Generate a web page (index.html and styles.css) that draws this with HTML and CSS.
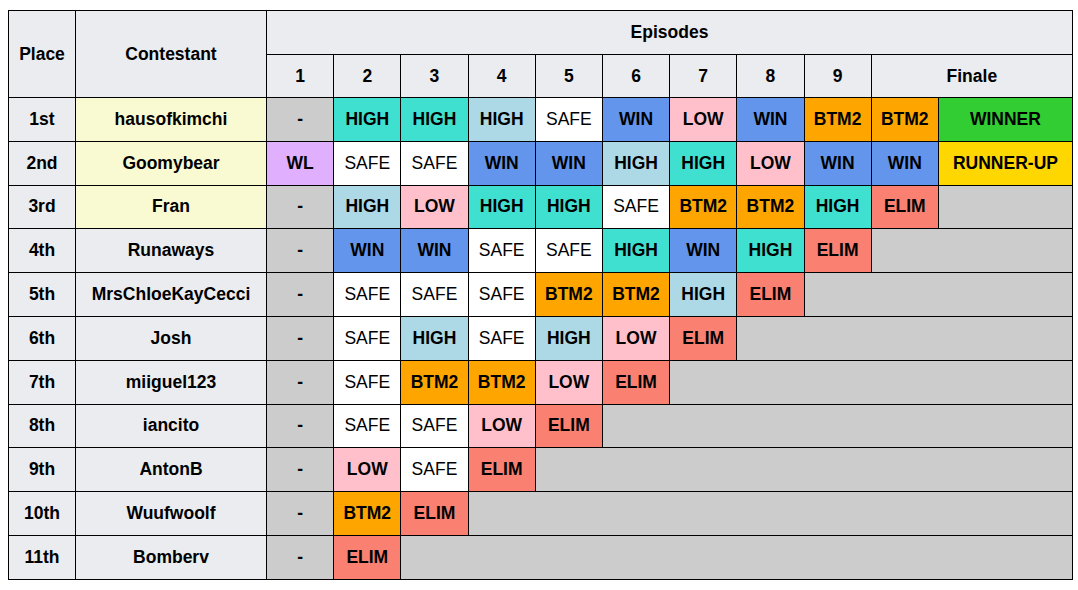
FILE: index.html
```html
<!DOCTYPE html>
<html>
<head>
<meta charset="utf-8">
<link rel="stylesheet" href="styles.css">
</head>
<body>
<table class="results">
  <colgroup>
    <col class="c-place">
    <col class="c-name">
    <col class="c-ep"><col class="c-ep"><col class="c-ep"><col class="c-ep"><col class="c-ep">
    <col class="c-ep"><col class="c-ep"><col class="c-ep"><col class="c-ep"><col class="c-ep">
    <col class="c-fin">
  </colgroup>
  <thead>
    <tr class="hrow1">
      <th rowspan="2">Place</th>
      <th rowspan="2">Contestant</th>
      <th colspan="11">Episodes</th>
    </tr>
    <tr class="hrow2">
      <th>1</th><th>2</th><th>3</th><th>4</th><th>5</th><th>6</th><th>7</th><th>8</th><th>9</th>
      <th colspan="2">Finale</th>
    </tr>
  </thead>
  <tbody>
    <tr>
      <th>1st</th><td class="top">hausofkimchi</td>
      <td class="na">-</td><td class="high">HIGH</td><td class="high">HIGH</td><td class="high2">HIGH</td><td class="safe">SAFE</td><td class="win">WIN</td><td class="low">LOW</td><td class="win">WIN</td><td class="btm">BTM2</td><td class="btm">BTM2</td><td class="winner">WINNER</td>
    </tr>
    <tr>
      <th>2nd</th><td class="top">Goomybear</td>
      <td class="wl">WL</td><td class="safe">SAFE</td><td class="safe">SAFE</td><td class="win">WIN</td><td class="win">WIN</td><td class="high2">HIGH</td><td class="high">HIGH</td><td class="low">LOW</td><td class="win">WIN</td><td class="win">WIN</td><td class="runner">RUNNER-UP</td>
    </tr>
    <tr>
      <th>3rd</th><td class="top">Fran</td>
      <td class="na">-</td><td class="high2">HIGH</td><td class="low">LOW</td><td class="high">HIGH</td><td class="high">HIGH</td><td class="safe">SAFE</td><td class="btm">BTM2</td><td class="btm">BTM2</td><td class="high">HIGH</td><td class="elim">ELIM</td><td class="na"></td>
    </tr>
    <tr>
      <th>4th</th><td class="name">Runaways</td>
      <td class="na">-</td><td class="win">WIN</td><td class="win">WIN</td><td class="safe">SAFE</td><td class="safe">SAFE</td><td class="high">HIGH</td><td class="win">WIN</td><td class="high">HIGH</td><td class="elim">ELIM</td><td class="na" colspan="2"></td>
    </tr>
    <tr>
      <th>5th</th><td class="name">MrsChloeKayCecci</td>
      <td class="na">-</td><td class="safe">SAFE</td><td class="safe">SAFE</td><td class="safe">SAFE</td><td class="btm">BTM2</td><td class="btm">BTM2</td><td class="high2">HIGH</td><td class="elim">ELIM</td><td class="na" colspan="3"></td>
    </tr>
    <tr>
      <th>6th</th><td class="name">Josh</td>
      <td class="na">-</td><td class="safe">SAFE</td><td class="high2">HIGH</td><td class="safe">SAFE</td><td class="high2">HIGH</td><td class="low">LOW</td><td class="elim">ELIM</td><td class="na" colspan="4"></td>
    </tr>
    <tr>
      <th>7th</th><td class="name">miiguel123</td>
      <td class="na">-</td><td class="safe">SAFE</td><td class="btm">BTM2</td><td class="btm">BTM2</td><td class="low">LOW</td><td class="elim">ELIM</td><td class="na" colspan="5"></td>
    </tr>
    <tr>
      <th>8th</th><td class="name">iancito</td>
      <td class="na">-</td><td class="safe">SAFE</td><td class="safe">SAFE</td><td class="low">LOW</td><td class="elim">ELIM</td><td class="na" colspan="6"></td>
    </tr>
    <tr>
      <th>9th</th><td class="name">AntonB</td>
      <td class="na">-</td><td class="low">LOW</td><td class="safe">SAFE</td><td class="elim">ELIM</td><td class="na" colspan="7"></td>
    </tr>
    <tr>
      <th>10th</th><td class="name">Wuufwoolf</td>
      <td class="na">-</td><td class="btm">BTM2</td><td class="elim">ELIM</td><td class="na" colspan="8"></td>
    </tr>
    <tr>
      <th>11th</th><td class="name">Bomberv</td>
      <td class="na">-</td><td class="elim">ELIM</td><td class="na" colspan="9"></td>
    </tr>
  </tbody>
</table>
</body>
</html>
```

FILE: styles.css
```css
html, body {
  margin: 0;
  padding: 0;
  background: #ffffff;
}
body {
  padding: 10px 0 0 8px;
  font-family: "Liberation Sans", Arial, sans-serif;
  font-size: 17.5px;
  color: #000;
}
.results {
  border-collapse: collapse;
  table-layout: fixed;
  width: 1065px;
}
.c-place { width: 67px; }
.c-name { width: 191px; }
.c-ep { width: 67.2px; }
.c-fin { width: 134px; }

.results th,
.results td {
  border: 1px solid #000;
  padding: 0;
  text-align: center;
  font-weight: bold;
  white-space: nowrap;
}
.results th {
  background: #eaecf0;
}
.hrow1 th { height: 43px; }
.hrow2 th { height: 42px; }
.results tbody tr { height: 43.8px; }

.name { background: #eaecf0; }
.top { background: #fafad2; }
.na { background: #cccccc; }
.safe { background: #ffffff; font-weight: normal !important; }
.high { background: #40e0d0; }
.high2 { background: #add8e6; }
.win { background: #6495ed; }
.low { background: #ffc0cb; }
.btm { background: #ffa500; }
.elim { background: #fa8072; }
.winner { background: #32cd32; }
.runner { background: #ffd700; }
.wl { background: #e0b0ff; }
```
